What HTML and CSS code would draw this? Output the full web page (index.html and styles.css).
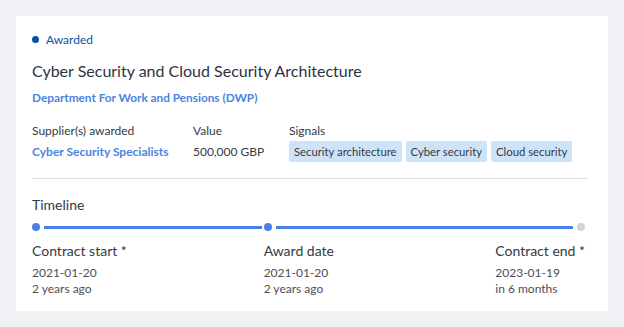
FILE: index.html
```html
<!DOCTYPE html>
<html lang="en">
<head>
  <meta charset="UTF-8" />
  <title>Contract award</title>
  <link rel="stylesheet" href="styles.css">
</head>
<body>
  <div class="card">
    <div class="status"><span class="status-dot"></span>Awarded</div>
    <h1 class="title">Cyber Security and Cloud Security Architecture</h1>
    <a class="buyer" href="#">Department For Work and Pensions (DWP)</a>

    <div class="facts">
      <div class="fact supplier">
        <div class="fact-label">Supplier(s) awarded</div>
        <a class="fact-link" href="#">Cyber Security Specialists</a>
      </div>
      <div class="fact amount">
        <div class="fact-label">Value</div>
        <div class="fact-value">500,000 GBP</div>
      </div>
      <div class="fact">
        <div class="fact-label">Signals</div>
        <div class="tags">
          <span class="tag">Security architecture</span>
          <span class="tag">Cyber security</span>
          <span class="tag">Cloud security</span>
        </div>
      </div>
    </div>

    <hr class="divider">

    <h2 class="section-title">Timeline</h2>
    <div class="timeline">
      <div class="tl-col">
        <div class="tl-track"><span class="tl-dot"></span><span class="tl-line gap"></span></div>
        <div class="tl-name">Contract start *</div>
        <div class="tl-date">2021-01-20</div>
        <div class="tl-rel">2 years ago</div>
      </div>
      <div class="tl-col">
        <div class="tl-track"><span class="tl-dot"></span><span class="tl-line"></span></div>
        <div class="tl-name">Award date</div>
        <div class="tl-date">2021-01-20</div>
        <div class="tl-rel">2 years ago</div>
      </div>
      <div class="tl-col">
        <div class="tl-track"><span class="tl-line"></span><span class="tl-dot future"></span></div>
        <div class="tl-name">Contract end *</div>
        <div class="tl-date">2023-01-19</div>
        <div class="tl-rel">in 6 months</div>
      </div>
    </div>
  </div>
</body>
</html>
```

FILE: styles.css
```css
body {
  margin: 0;
  padding: 16px;
  background-color: #eff1f4;
  font-family: Lato, 'Open Sans', sans-serif;
  color: #333a44;
}
.card {
  background: white;
  width: 556px;
  padding: 15px 20px 16px 16px;
  height: 264px;
}
a {
  text-decoration: none;
}

/* header */
.status {
  display: flex;
  align-items: center;
  gap: 7px;
  font-size: 12px;
  color: #0d4fa3;
  height: 16px;
}
.status-dot {
  width: 7px;
  height: 7px;
  border-radius: 50%;
  background-color: #0d4fa3;
}
.title {
  margin: 13px 0 0;
  font-size: 16px;
  font-weight: 400;
  line-height: 22px;
  color: #2e343d;
}
.buyer {
  display: block;
  margin-top: 8px;
  font-size: 11.8px;
  font-weight: 700;
  line-height: 16px;
  color: #4a84e0;
}

/* supplier / value / signals */
.facts {
  display: flex;
  margin-top: 17px;
  font-size: 12px;
  white-space: nowrap;
}
.fact {
  flex: none;
}
.supplier {
  width: 161px;
}
.amount {
  width: 96px;
}
.fact-label {
  line-height: 16px;
  color: #333a44;
}
.fact-link, .fact-value {
  display: block;
  margin-top: 2px;
  line-height: 21px;
}
.fact-link {
  font-weight: 700;
  color: #4a84e0;
}
.tags {
  display: flex;
  gap: 4px;
  margin-top: 2px;
}
.tag {
  background-color: #cfe3f8;
  border-radius: 2px;
  padding: 0 5px;
  line-height: 21px;
  font-size: 11.3px;
}
.divider {
  border: 0;
  border-top: 1px solid #dcdfe3;
  margin: 16px 0 0;
}

/* timeline */
.section-title {
  margin: 16px 0 0;
  font-size: 14px;
  font-weight: 400;
  line-height: 20px;
}
.timeline {
  display: grid;
  grid-template-columns: 1fr 1fr auto;
  margin-top: 8px;
  padding-right: 3px;
}
.tl-track {
  display: flex;
  align-items: center;
  gap: 4px;
  height: 8px;
}
.tl-dot {
  width: 8px;
  height: 8px;
  border-radius: 50%;
  background-color: #4a80e3;
  flex: none;
}
.tl-dot.future {
  background-color: #d3d5d8;
}
.tl-line {
  flex: 1;
  height: 3px;
  background-color: #4a80e3;
}
.tl-line.gap {
  margin-right: 2px;
}
.tl-name {
  margin-top: 10px;
  font-size: 14px;
  line-height: 20px;
}
.tl-date, .tl-rel {
  font-size: 12px;
  line-height: 16px;
  color: #4a4f57;
}
.tl-date {
  margin-top: 4px;
}
```
